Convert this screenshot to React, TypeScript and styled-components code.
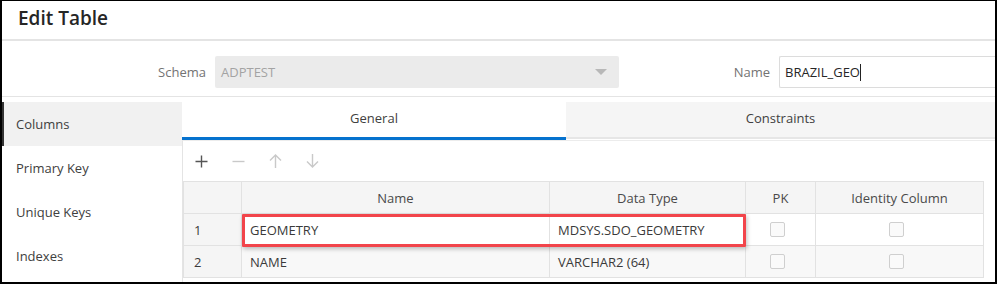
import styled, { createGlobalStyle } from 'styled-components';

const GlobalStyle = createGlobalStyle`
  html, body {
    margin: 0;
    padding: 0;
    background: #ffffff;
  }
  body {
    font-family: "Open Sans", "Liberation Sans", sans-serif;
    font-size: 13px;
    color: #404040;
  }
  * { box-sizing: border-box; }
`;

const Frame = styled.div`
  width: 997px;
  height: 284px;
  border: 2px solid #000;
  border-top-width: 1px;
  overflow: hidden;
  background: #fff;
  display: flex;
  flex-direction: column;
`;

const TitleBar = styled.div`
  height: 40px;
  flex-shrink: 0;
  padding-left: 16px;
  display: flex;
  align-items: center;
  font-size: 19px;
  font-weight: 600;
  color: #262626;
  border-bottom: 2px solid #e4e4e4;
  padding-bottom: 4px;
`;

const FormRow = styled.div`
  height: 56px;
  flex-shrink: 0;
  display: flex;
  align-items: flex-start;
  padding-top: 15px;
  border-bottom: 1px solid #e4e4e4;
`;

const FieldLabel = styled.label<{ $w: number }>`
  width: ${(p) => p.$w}px;
  text-align: right;
  margin-right: 9px;
  line-height: 32px;
  color: #737373;
`;

const SelectBox = styled.div`
  width: 404px;
  height: 32px;
  background: #ebebeb;
  border-radius: 2px;
  display: flex;
  align-items: center;
  justify-content: space-between;
  padding: 0 12px 0 6px;
  color: #a3a3a3;
`;

const Caret = styled.span`
  width: 0;
  height: 0;
  border-left: 6px solid transparent;
  border-right: 6px solid transparent;
  border-top: 6px solid #b8b8b8;
`;

const TextInput = styled.div`
  flex: 1;
  height: 32px;
  border: 1px solid #dcdcdc;
  border-right: none;
  border-radius: 2px 0 0 2px;
  display: flex;
  align-items: center;
  padding-left: 5px;
  color: #262626;
`;

const Cursor = styled.span`
  width: 1px;
  height: 17px;
  background: #222;
`;

const Body = styled.div`
  flex: 1;
  display: flex;
  padding-top: 5px;
  min-height: 0;
`;

const Nav = styled.div`
  width: 180px;
  flex-shrink: 0;
  display: flex;
  flex-direction: column;
`;

const NavItem = styled.div<{ $active?: boolean }>`
  height: 44px;
  display: flex;
  align-items: center;
  padding-left: 12px;
  color: #404040;
  background: ${(p) => (p.$active ? '#f1f1f1' : 'transparent')};
  border-left: 2px solid ${(p) => (p.$active ? '#333' : 'transparent')};
`;

const Main = styled.div`
  flex: 1;
  display: flex;
  flex-direction: column;
  min-width: 0;
`;

const Tabs = styled.div`
  display: flex;
  height: 38px;
  flex-shrink: 0;
`;

const Tab = styled.div<{ $active?: boolean; $w?: number }>`
  ${(p) => (p.$w ? `width: ${p.$w}px;` : 'flex: 1;')}
  display: flex;
  align-items: center;
  justify-content: center;
  padding-bottom: 4px;
  color: #404040;
  background: ${(p) => (p.$active ? '#fff' : '#f5f5f5')};
  border-bottom: ${(p) => (p.$active ? '3px solid #0572ce' : '2px solid #e6e6e6')};
  margin-bottom: ${(p) => (p.$active ? '0' : '1px')};
`;

const Panel = styled.div`
  flex: 1;
  border-left: 1px solid #e4e4e4;
  border-top: 1px solid #ececec;
  display: flex;
  flex-direction: column;
`;

const Toolbar = styled.div`
  height: 40px;
  flex-shrink: 0;
  display: flex;
  align-items: center;
`;

const ToolButton = styled.div<{ $disabled?: boolean }>`
  width: 37px;
  height: 30px;
  display: flex;
  align-items: center;
  justify-content: center;
  color: ${(p) => (p.$disabled ? '#c9c9c9' : '#555')};
`;

const Grid = styled.div`
  display: grid;
  grid-template-columns: 58px 308px 196px 70px 168px;
  grid-auto-rows: 32px;
  width: 801px;
  border-top: 1px solid #e2e2e2;
  border-left: 1px solid #e2e2e2;
`;

const HeadCell = styled.div`
  background: #f5f5f5;
  border-right: 1px solid #e2e2e2;
  border-bottom: 1px solid #e2e2e2;
  display: flex;
  align-items: center;
  justify-content: center;
  color: #4a4a4a;
`;

const Cell = styled.div<{ $row: number; $col: number; $center?: boolean }>`
  grid-row: ${(p) => p.$row};
  grid-column: ${(p) => p.$col};
  background: ${(p) => (p.$col === 1 ? '#f5f5f5' : p.$row === 2 ? '#fff' : '#f8f8f8')};
  border-right: 1px solid #e2e2e2;
  border-bottom: 1px solid #e2e2e2;
  display: flex;
  align-items: center;
  justify-content: ${(p) => (p.$center ? 'center' : 'flex-start')};
  padding-left: ${(p) => (p.$center ? 0 : p.$col === 1 ? 10 : 8)}px;
  color: #3a3a3a;
`;

const Check = styled.span`
  width: 15px;
  height: 15px;
  margin-right: 7px;
  border: 1px solid #cfcfcf;
  border-radius: 2px;
  background: #fafafa;
`;

const Highlight = styled.div`
  grid-row: 2;
  grid-column: 2 / 4;
  margin-bottom: -1px;
  border: 3px solid #f2454b;
  border-radius: 1px;
  box-shadow: 1px 2px 4px rgba(0, 0, 0, 0.25);
  pointer-events: none;
`;

const PlusIcon = () => (
  <svg width="13" height="13" viewBox="0 0 13 13">
    <path d="M6.5 0.5v12M0.5 6.5h12" stroke="currentColor" strokeWidth="1.4" fill="none" />
  </svg>
);

const MinusIcon = () => (
  <svg width="13" height="13" viewBox="0 0 13 13">
    <path d="M0.5 6.5h12" stroke="currentColor" strokeWidth="1.4" fill="none" />
  </svg>
);

const ArrowIcon = ({ down }: { down?: boolean }) => (
  <svg width="13" height="14" viewBox="0 0 13 14" style={down ? { transform: 'rotate(180deg)' } : undefined}>
    <path d="M6.5 1v13M1 6.5L6.5 1l5.5 5.5" stroke="currentColor" strokeWidth="1.4" fill="none" />
  </svg>
);

const rows = [
  { n: 1, name: 'GEOMETRY', type: 'MDSYS.SDO_GEOMETRY' },
  { n: 2, name: 'NAME', type: 'VARCHAR2 (64)' },
];

export default function App() {
  return (
    <>
      <GlobalStyle />
      <Frame>
        <TitleBar>Edit Table</TitleBar>
        <FormRow>
          <FieldLabel $w={204}>Schema</FieldLabel>
          <SelectBox>
            ADPTEST
            <Caret />
          </SelectBox>
          <FieldLabel $w={151}>Name</FieldLabel>
          <TextInput>
            BRAZIL_GEO
            <Cursor />
          </TextInput>
        </FormRow>
        <Body>
          <Nav>
            <NavItem $active>Columns</NavItem>
            <NavItem>Primary Key</NavItem>
            <NavItem>Unique Keys</NavItem>
            <NavItem>Indexes</NavItem>
          </Nav>
          <Main>
            <Tabs>
              <Tab $active $w={384}>General</Tab>
              <Tab>Constraints</Tab>
            </Tabs>
            <Panel>
              <Toolbar>
                <ToolButton><PlusIcon /></ToolButton>
                <ToolButton $disabled><MinusIcon /></ToolButton>
                <ToolButton $disabled><ArrowIcon /></ToolButton>
                <ToolButton $disabled><ArrowIcon down /></ToolButton>
              </Toolbar>
              <Grid>
                <HeadCell />
                <HeadCell>Name</HeadCell>
                <HeadCell>Data Type</HeadCell>
                <HeadCell>PK</HeadCell>
                <HeadCell>Identity Column</HeadCell>
                {rows.map((r) => [
                  <Cell key={`n${r.n}`} $row={r.n + 1} $col={1}>{r.n}</Cell>,
                  <Cell key={`a${r.n}`} $row={r.n + 1} $col={2}>{r.name}</Cell>,
                  <Cell key={`t${r.n}`} $row={r.n + 1} $col={3}>{r.type}</Cell>,
                  <Cell key={`p${r.n}`} $row={r.n + 1} $col={4} $center><Check /></Cell>,
                  <Cell key={`i${r.n}`} $row={r.n + 1} $col={5} $center><Check /></Cell>,
                ])}
                <Highlight />
              </Grid>
            </Panel>
          </Main>
        </Body>
      </Frame>
    </>
  );
}
